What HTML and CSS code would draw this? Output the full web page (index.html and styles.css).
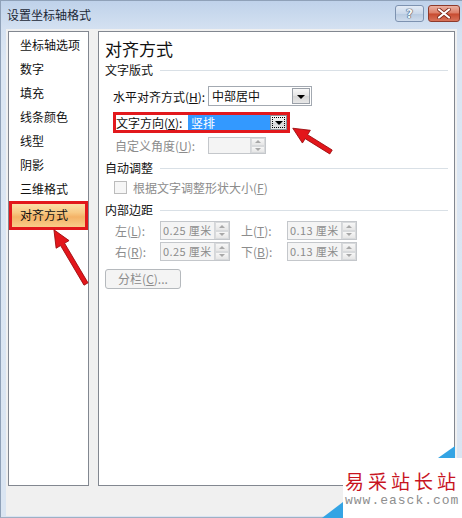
FILE: index.html
```html
<!DOCTYPE html>
<html lang="zh-CN">
<head>
<meta charset="utf-8">
<title>设置坐标轴格式</title>
<link rel="stylesheet" href="styles.css">
</head>
<body>
<div class="window">
  <div class="titlebar">
    <span class="title">设置坐标轴格式</span>
    <div class="caption-btns">
      <div class="cbtn help"><span>?</span></div>
      <div class="cbtn close">
        <svg width="14" height="11" viewBox="0 0 14 11"><path d="M2 1.5 L12 9.5 M12 1.5 L2 9.5" stroke="#7a2416" stroke-width="3.6" stroke-linecap="round"/><path d="M2 1.5 L12 9.5 M12 1.5 L2 9.5" stroke="#ffffff" stroke-width="2.2" stroke-linecap="round"/></svg>
      </div>
    </div>
  </div>
  <div class="client">
    <ul class="nav">
      <li>坐标轴选项</li>
      <li>数字</li>
      <li>填充</li>
      <li>线条颜色</li>
      <li>线型</li>
      <li>阴影</li>
      <li>三维格式</li>
      <li class="active">对齐方式</li>
    </ul>
    <div class="panel">
      <h1 class="heading">对齐方式</h1>
      <div class="group g1">文字版式</div>
      <div class="row row-h">
        <span class="lbl lbl-h">水平对齐方式(<u>H</u>):</span>
        <div class="combo combo-h"><span class="combo-text">中部居中</span><span class="drop"><i class="tri"></i></span></div>
      </div>
      <div class="row row-dir">
        <span class="lbl lbl-dir">文字方向(<u>X</u>):</span>
        <div class="combo combo-dir"><span class="combo-text">竖排</span><span class="drop focus"><i class="tri"></i></span></div>
      </div>
      <div class="row row-angle">
        <span class="lbl dis lbl-angle">自定义角度(<u>U</u>):</span>
        <div class="spin spin-angle"><span class="val"></span><span class="spinbtns"><i class="up"></i><i class="down"></i></span></div>
      </div>
      <div class="group g2">自动调整</div>
      <div class="row row-check">
        <span class="checkbox"></span>
        <span class="lbl dis">根据文字调整形状大小(<u>F</u>)</span>
      </div>
      <div class="group g3">内部边距</div>
      <div class="margins">
        <span class="lbl dis">左(<u>L</u>):</span>
        <div class="spin"><span class="val">0.25 厘米</span><span class="spinbtns"><i class="up"></i><i class="down"></i></span></div>
        <span></span>
        <span class="lbl dis">上(<u>T</u>):</span>
        <div class="spin"><span class="val">0.13 厘米</span><span class="spinbtns"><i class="up"></i><i class="down"></i></span></div>
        <span class="lbl dis">右(<u>R</u>):</span>
        <div class="spin"><span class="val">0.25 厘米</span><span class="spinbtns"><i class="up"></i><i class="down"></i></span></div>
        <span></span>
        <span class="lbl dis">下(<u>B</u>):</span>
        <div class="spin"><span class="val">0.13 厘米</span><span class="spinbtns"><i class="up"></i><i class="down"></i></span></div>
      </div>
      <div class="btn-cols">分栏(<u>C</u>)...</div>
    </div>
  </div>
</div>

<div class="watermark">
  <div class="wm-cn">易采站长站</div>
  <div class="wm-en">www.easck.com</div>
</div>

<svg class="overlay" width="462" height="518" viewBox="0 0 462 518">
  <polygon points="438,458 455,446 455,458" fill="#34a4e4"/>
  <polygon points="322,518 343,502 343,518" fill="#34a4e4"/>
  <g transform="translate(331,152) rotate(211.9)">
    <polygon points="0,-2.3 29,-2.3 29,-7.5 45,0 29,7.5 29,2.3 0,2.3" fill="#e3161b" stroke="#9c0b0e" stroke-width="0.8" stroke-linejoin="round"/>
  </g>
  <g transform="translate(86,284) rotate(239.4)">
    <polygon points="0,-2.3 46,-2.3 46,-7.5 63,0 46,7.5 46,2.3 0,2.3" fill="#e3161b" stroke="#9c0b0e" stroke-width="0.8" stroke-linejoin="round"/>
  </g>
</svg>
</body>
</html>
```

FILE: styles.css
```css
body {
  margin: 0;
  width: 462px;
  height: 518px;
  overflow: hidden;
  position: relative;
  font-family: "Noto Sans CJK SC", "Noto Sans", sans-serif;
  font-size: 12px;
  color: #111;
}

.window {
  height: 518px;
  box-sizing: border-box;
  border-left: 1px solid #8fa1b8;
  border-top: 1px solid #8fa1b8;
  border-bottom: 1px solid #9fb0c4;
  padding-bottom: 1px;
  background: linear-gradient(#bfd2ea, #d4e1f1 28px, #dbe6f3 60px, #dae5f2);
}

.titlebar {
  height: 28px;
  display: flex;
  align-items: flex-start;
  padding-left: 6px;
}

.title {
  line-height: 27px;
  font-size: 12px;
  color: #1b2736;
}

.caption-btns {
  margin-left: auto;
  margin-right: 2px;
  margin-top: 4px;
  display: flex;
  gap: 4px;
}

.cbtn {
  height: 17px;
  box-sizing: border-box;
  border-radius: 3px;
  display: flex;
  align-items: center;
  justify-content: center;
}

.help {
  width: 29px;
  border: 1px solid #7d92b0;
  background: linear-gradient(#e3ebf5, #cad8ea 50%, #b7c9e0 51%, #cfdcec);
}

.help span {
  font-family: "DejaVu Sans", sans-serif;
  font-weight: bold;
  font-size: 12px;
  line-height: 14px;
  color: #f4f7fb;
  text-shadow: 0 0 1px #3b4b63, 0 0 1px #3b4b63, 0 0 1px #3b4b63;
}

.close {
  width: 32px;
  border: 1px solid #8e3a2b;
  background: linear-gradient(#eab1a2, #dc7d66 48%, #c74a2f 52%, #d8735a);
}

.close svg { display: block; }

.client {
  margin: 0 5px 0 5px;
  height: 487px;
  box-sizing: border-box;
  background: #f0f0f0;
  padding: 2px 2px 0 2px;
  display: flex;
  gap: 9px;
  align-items: flex-start;
}

.nav {
  width: 81px;
  height: 455px;
  box-sizing: border-box;
  margin: 0;
  padding: 1px 0 0 0;
  list-style: none;
  background: #fff;
  border: 1px solid #828790;
}

.nav li {
  height: 24px;
  line-height: 24px;
  padding-left: 11px;
  white-space: nowrap;
  color: #111;
}

.nav li.active {
  height: 29px;
  line-height: 27px;
  box-sizing: border-box;
  padding-left: 11px;
  background: linear-gradient(#fce8b6, #f8c983 40%, #f4b266 55%, #fad594);
  box-shadow: inset 0 0 0 3px #e2181c;
}

.panel {
  flex: 1;
  height: 455px;
  box-sizing: border-box;
  background: #fff;
  border: 1px solid #828790;
  padding: 0 6px;
}

.heading {
  margin: 6px 0 0 0;
  font-size: 17px;
  font-weight: normal;
  line-height: 22px;
  color: #111;
}

.group {
  height: 16px;
  line-height: 16px;
  display: flex;
  align-items: center;
  white-space: nowrap;
}

.group::after {
  content: "";
  flex: 1;
  height: 1px;
  background: #d9e0e6;
  margin-left: 7px;
}

.g1 { margin-top: 2px; }
.g2 { margin-top: 6px; }
.g3 { margin-top: 7px; }

.row {
  display: flex;
  align-items: center;
  white-space: nowrap;
}

.lbl { white-space: nowrap; }
.lbl u { text-decoration: underline; }
.dis { color: #8c8c8c; }

.row-h {
  margin-top: 8px;
  height: 20px;
  padding-left: 8px;
}

.lbl-h { width: 95px; }

.combo {
  display: flex;
  align-items: center;
  box-sizing: border-box;
}

.combo-h {
  width: 104px;
  height: 20px;
  border: 1px solid #a3a9b1;
  background: #fff;
}

.combo-text {
  flex: 1;
  padding-left: 3px;
  line-height: 18px;
}

.drop {
  width: 18px;
  height: 16px;
  margin-right: 1px;
  box-sizing: border-box;
  border: 1px solid #9aa0a8;
  background: linear-gradient(#f8f8f8, #e4e4e4 50%, #d6d6d6 51%, #e8e8e8);
  display: flex;
  align-items: center;
  justify-content: center;
}

.tri {
  width: 0;
  height: 0;
  border-left: 4px solid transparent;
  border-right: 4px solid transparent;
  border-top: 4px solid #000;
  margin-top: 1px;
}

.row-dir {
  margin-top: 6px;
  margin-left: 8px;
  width: 177px;
  height: 21px;
  box-sizing: border-box;
  border: 3px solid #e2181c;
}

.lbl-dir {
  width: 72px;
  line-height: 15px;
}

.combo-dir {
  flex: 1;
  height: 15px;
  background: #3399ff;
  color: #fff;
}

.combo-dir .combo-text {
  line-height: 15px;
  padding-left: 3px;
}

.combo-dir .drop {
  height: 15px;
  width: 17px;
  margin-right: 0;
  border: 1px solid #8c9096;
}

.drop.focus {
  outline: 1px dotted #000;
  outline-offset: -3px;
}

.row-angle {
  margin-top: 4px;
  height: 17px;
  padding-left: 10px;
}

.lbl-angle { width: 93px; }

.spin {
  display: flex;
  height: 19px;
  box-sizing: border-box;
  border: 1px solid #c4c7cb;
  background: #f4f4f4;
  overflow: hidden;
}

.spin-angle {
  width: 58px;
  height: 17px;
}

.val {
  flex: 1;
  min-width: 0;
  white-space: nowrap;
  padding-left: 2px;
  color: #8c8c8c;
  font-size: 11px;
  line-height: 17px;
  letter-spacing: 0.4px;
}

.spinbtns {
  width: 14px;
  flex: none;
  display: flex;
  flex-direction: column;
  border-left: 1px solid #d4d6d9;
}

.spinbtns i {
  flex: 1;
  display: flex;
  align-items: center;
  justify-content: center;
  background: linear-gradient(#f7f7f7, #e6e6e6);
  border: 1px solid #d8dadc;
}

.spinbtns i::before {
  content: "";
  width: 0;
  height: 0;
  border-left: 3px solid transparent;
  border-right: 3px solid transparent;
}

.spinbtns .up::before { border-bottom: 3px solid #a8a8a8; }
.spinbtns .down::before { border-top: 3px solid #a8a8a8; }

.row-check {
  margin-top: 3px;
  height: 16px;
  padding-left: 9px;
}

.checkbox {
  width: 13px;
  height: 13px;
  box-sizing: border-box;
  border: 1px solid #bcbcbc;
  background: #f6f6f6;
  margin-right: 6px;
  flex: none;
}

.margins {
  margin-top: 3px;
  padding-left: 10px;
  display: grid;
  grid-template-columns: 45px 70px 11px 46px 70px;
  grid-auto-rows: 19px;
  row-gap: 2px;
  align-items: center;
}

.btn-cols {
  margin-top: 8px;
  width: 76px;
  height: 20px;
  box-sizing: border-box;
  border: 1px solid #b5b9bd;
  border-radius: 3px;
  background: #f4f4f4;
  color: #8c8c8c;
  text-align: center;
  line-height: 18px;
  white-space: nowrap;
}

.watermark {
  position: absolute;
  left: 343px;
  top: 458px;
  width: 119px;
  height: 60px;
  background: #fff;
  box-sizing: border-box;
  padding-left: 2px;
}

.wm-cn {
  margin-top: 11px;
  font-size: 19px;
  line-height: 24px;
  letter-spacing: 4px;
  color: #c8141f;
  white-space: nowrap;
}

.wm-en {
  font-family: "Liberation Mono", monospace;
  font-size: 13px;
  line-height: 16px;
  letter-spacing: 1px;
  color: #8e8e8e;
  white-space: nowrap;
}

.overlay {
  position: absolute;
  left: 0;
  top: 0;
  pointer-events: none;
}
```
